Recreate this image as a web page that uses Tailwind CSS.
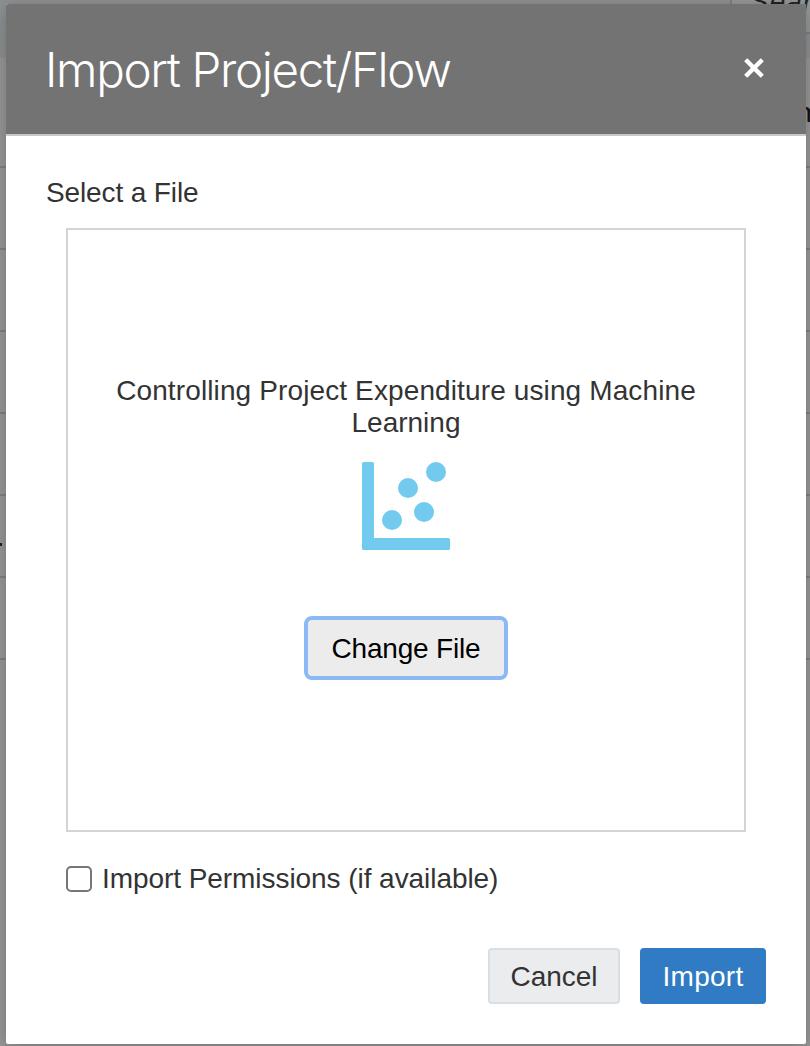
<!DOCTYPE html>
<html lang="en">
<head>
<meta charset="utf-8">
<title>Import Project/Flow</title>
<script src="https://cdn.jsdelivr.net/npm/@tailwindcss/browser@4"></script>
</head>
<body class="relative h-[1046px] w-[810px] overflow-hidden bg-[#989898] font-['Liberation_Sans',sans-serif] text-[28px] leading-8 text-[#333]">
  <!-- dimmed page behind the dialog -->
  <div class="absolute inset-0" aria-hidden="true">
    <div class="flex h-[58px] justify-end bg-[#8e9193]">
      <div class="h-[34px] w-[80px] overflow-hidden border-b-2 border-l-2 border-[#7d8185] bg-[#969797] pl-[20px] text-[#222]"><div class="-ml-[2px] -mt-[14px] whitespace-nowrap italic tracking-[1px]">Search</div></div>
    </div>
    <div class="h-[110px] border-b-2 border-[#7d8389]"></div>
    <div class="h-[82px] border-b-2 border-[#7d8389]"></div>
    <div class="h-[82px] border-b-2 border-[#7d8389]"></div>
    <div class="h-[82px] border-b-2 border-[#7d8389]"></div>
    <div class="h-[82px] border-b-2 border-[#7d8389]"></div>
    <div class="h-[82px] border-b-2 border-[#7d8389]"></div>
    <div class="h-[82px] border-b-2 border-[#7d8389]"></div>
    <div class="absolute left-0 top-[543px] h-[3px] w-[2px] bg-[#222]"></div>
    <div class="absolute left-[797px] top-[97px] text-[#111]">m</div>
  </div>

  <div class="absolute left-[6px] top-[4px] flex h-[1040px] w-[800px] flex-col overflow-hidden rounded-[2px] bg-white shadow-[0_4px_20px_rgba(0,0,0,0.25)]" role="dialog">
    <header class="flex h-[132px] shrink-0 items-center justify-between border-b-2 border-[#c8c8c8] bg-[#737373] pl-[39px] pr-[42px] text-white">
      <h1 class="mt-[1px] whitespace-nowrap font-['Inter',sans-serif] text-[47.5px] font-light leading-[56px] tracking-[-1.35px]">Import Project/Flow</h1>
      <svg class="-mt-[2px] size-[20px]" viewBox="0 0 20 20" fill="none" stroke="#fff" stroke-width="4.4" stroke-linejoin="round"><path d="M1.700 1.700 18.300 18.300M18.300 1.700 1.700 18.300"/></svg>
    </header>
    <main class="flex flex-col px-[40px] pt-[41px]">
      <div class="whitespace-nowrap tracking-[-0.12px]">Select a File</div>
      <section class="mx-[20px] mt-[19px] flex h-[604px] flex-col items-center border-2 border-[#d4d4d4] pt-[145px] text-center">
        <p><span class="tracking-[0.12px]">Controlling Project Expenditure using Machine</span><br>Learning</p>
        <svg class="mt-[23px] h-[88px] w-[88px]" viewBox="0 0 88 88" fill="#72caee"><path d="M1.5 0h9q1.500 0 1.500 1.500V76h74.500q1.500 0 1.500 1.500v9q0 1.500-1.500 1.500h-85Q0 88 0 86.500v-85Q0 0 1.500 0Z"/><circle cx="74" cy="10" r="10"/><circle cx="46" cy="26" r="10"/><circle cx="62" cy="50" r="10"/><circle cx="30" cy="58" r="10"/></svg>
        <button class="mt-[66px] h-[64px] w-[204px] rounded-[8px] border-4 border-[#8bb9f5] bg-[#ececec] pt-[2px] tracking-[-0.18px] text-black">Change File</button>
      </section>
      <label class="ml-[20px] mt-[31px] flex items-center whitespace-nowrap tracking-[-0.06px]"><input type="checkbox" class="mr-[10px] size-[26px] appearance-none rounded-[5px] border-2 border-[#767676] bg-white"><span>Import Permissions (if available)</span></label>
    </main>
    <footer class="mt-auto flex justify-end gap-[20px] pb-[40px] pr-[40px]">
      <button class="h-[56px] w-[132px] rounded-[4px] border-2 border-[#d6dfe6] bg-[#ebecee] pt-[2px]">Cancel</button>
      <button class="h-[56px] w-[126px] rounded-[4px] bg-[#307bc3] pt-[2px] text-white tracking-[0.3px]">Import</button>
    </footer>
  </div>
</body>
</html>
